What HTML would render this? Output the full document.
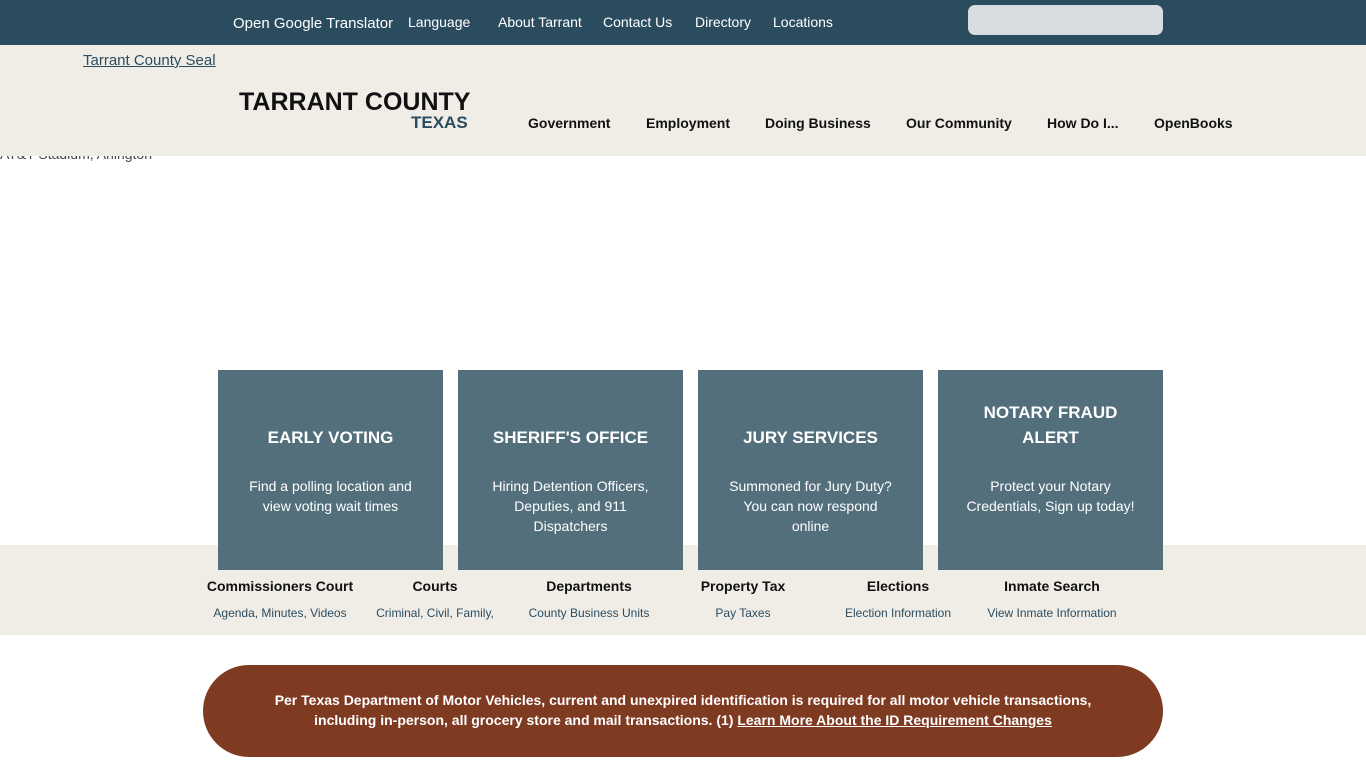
<!DOCTYPE html>
<html><head><meta charset="utf-8"><style>
*{margin:0;padding:0;box-sizing:border-box}
body{width:1366px;height:768px;overflow:hidden;background:#fff;font-family:"Liberation Sans",Arial,sans-serif;position:relative}
.a{position:absolute;white-space:nowrap}
.top{position:absolute;left:0;top:0;width:1366px;height:45px;background:#2b4c5f;z-index:2}
.top .a{color:#fff;font-size:14px;top:14px}
.hdr{position:absolute;left:0;top:45px;width:1366px;height:111px;background:#f0ede7;z-index:1}
.z{z-index:2}
.nav{font-size:14px;font-weight:bold;color:#111;top:115px}
.tile{position:absolute;top:370px;width:225px;height:200px;background:#536f7c;color:#fff;text-align:center}
.tile h3{position:absolute;left:0;right:0;font-size:17px;font-weight:bold;line-height:25px}
.tile p{position:absolute;left:28px;right:28px;top:106px;font-size:14px;line-height:20px}
.band{position:absolute;left:0;top:545px;width:1366px;height:90px;background:#f0ede7}
.q{position:absolute;text-align:center;width:170px}
.q b{display:block;font-size:14px;color:#111;margin-top:33px}
.q span{display:block;font-size:12px;color:#2b4c5f;margin-top:12px}
.ban{position:absolute;left:203px;top:665px;width:960px;height:92px;background:#7f3a22;border-radius:46px;color:#fff;font-weight:bold;font-size:14px;text-align:center;line-height:20px;padding-top:25px}
</style></head><body>
<div class="top">
<div class="a" style="left:233px;top:15px;font-size:15px">Open Google Translator</div>
<div class="a" style="left:408px">Language</div>
<div class="a" style="left:498px">About Tarrant</div>
<div class="a" style="left:603px">Contact Us</div>
<div class="a" style="left:695px">Directory</div>
<div class="a" style="left:773px">Locations</div>
<div class="a" style="left:968px;top:5px;width:195px;height:30px;background:#d8dde2;border-radius:7px"></div>
</div>
<div class="hdr"></div>
<div class="a z" style="left:83px;top:52px;font-size:15px;color:#2b4c5f;text-decoration:underline">Tarrant County Seal</div>
<div class="a z" style="left:239px;top:88px;font-size:25px;font-weight:bold;color:#111">TARRANT COUNTY</div>
<div class="a z" style="left:411px;top:113px;font-size:17px;font-weight:bold;color:#2b4c5f">TEXAS</div>
<div class="a nav z" style="left:528px">Government</div>
<div class="a nav z" style="left:646px">Employment</div>
<div class="a nav z" style="left:765px">Doing Business</div>
<div class="a nav z" style="left:906px">Our Community</div>
<div class="a nav z" style="left:1047px">How Do I...</div>
<div class="a nav z" style="left:1154px">OpenBooks</div>
<div class="a" style="left:0;top:146px;font-size:14px;color:#444">AT&amp;T Stadium, Arlington</div>
<div class="band"></div>
<div class="tile" style="left:218px"><h3 style="top:55px">EARLY VOTING</h3><p>Find a polling location and view voting wait times</p></div>
<div class="tile" style="left:458px"><h3 style="top:55px">SHERIFF'S OFFICE</h3><p>Hiring Detention Officers, Deputies, and 911 Dispatchers</p></div>
<div class="tile" style="left:698px"><h3 style="top:55px">JURY SERVICES</h3><p>Summoned for Jury Duty? You can now respond online</p></div>
<div class="tile" style="left:938px"><h3 style="top:30px">NOTARY FRAUD<br>ALERT</h3><p>Protect your Notary Credentials, Sign up today!</p></div>
<div class="q" style="left:195px;top:545px"><b>Commissioners Court</b><span>Agenda, Minutes, Videos</span></div>
<div class="q" style="left:350px;top:545px"><b>Courts</b><span>Criminal, Civil, Family,</span></div>
<div class="q" style="left:504px;top:545px"><b>Departments</b><span>County Business Units</span></div>
<div class="q" style="left:658px;top:545px"><b>Property Tax</b><span>Pay Taxes</span></div>
<div class="q" style="left:813px;top:545px"><b>Elections</b><span>Election Information</span></div>
<div class="q" style="left:967px;top:545px"><b>Inmate Search</b><span>View Inmate Information</span></div>
<div class="ban">Per Texas Department of Motor Vehicles, current and unexpired identification is required for all motor vehicle transactions,<br>including in-person, all grocery store and mail transactions. (1) <u>Learn More About the ID Requirement Changes</u></div>
</body></html>
